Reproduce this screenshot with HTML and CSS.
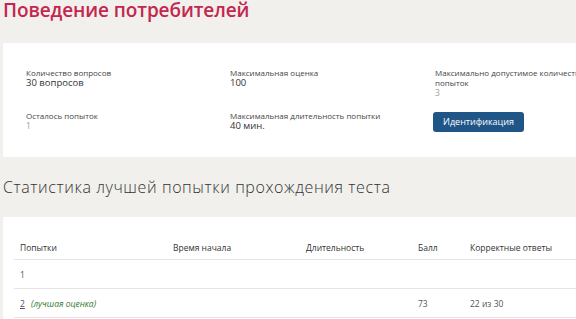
FILE: index.html
```html
<!DOCTYPE html>
<html lang="ru">
<head>
<meta charset="utf-8">
<title>Поведение потребителей</title>
<link rel="stylesheet" href="styles.css">
</head>
<body>
<div class="page">
  <h1 class="title">Поведение потребителей</h1>

  <section class="card info">
    <div class="info-grid">
      <div class="field">
        <div class="label">Количество вопросов</div>
        <div class="value">30 вопросов</div>
      </div>
      <div class="field">
        <div class="label">Максимальная оценка</div>
        <div class="value">100</div>
      </div>
      <div class="field field-wide">
        <div class="label">Максимально допустимое количество<br>попыток</div>
        <div class="value value-muted value-small">3</div>
      </div>
      <div class="field">
        <div class="label">Осталось попыток</div>
        <div class="value value-muted value-small">1</div>
      </div>
      <div class="field">
        <div class="label">Максимальная длительность попытки</div>
        <div class="value">40 мин.</div>
      </div>
      <div class="field">
        <button class="btn" type="button">Идентификация</button>
      </div>
    </div>
  </section>

  <h2 class="subtitle">Статистика лучшей попытки прохождения теста</h2>

  <section class="card stats">
    <table class="stats-table">
      <thead>
        <tr>
          <th class="c-attempt">Попытки</th>
          <th class="c-start">Время начала</th>
          <th class="c-dur">Длительность</th>
          <th class="c-score">Балл</th>
          <th class="c-correct">Корректные ответы</th>
        </tr>
      </thead>
      <tbody>
        <tr>
          <td>1</td>
          <td></td>
          <td></td>
          <td></td>
          <td></td>
        </tr>
        <tr>
          <td><a class="num-link" href="#">2</a> <span class="best">(лучшая оценка)</span></td>
          <td></td>
          <td></td>
          <td>73</td>
          <td>22 из 30</td>
        </tr>
      </tbody>
    </table>
  </section>
</div>
</body>
</html>
```

FILE: styles.css
```css
html, body {
  margin: 0;
  padding: 0;
}

body {
  background: #f1f0ed;
  font-family: "Open Sans", "Noto Sans", "DejaVu Sans", sans-serif;
  color: #333;
  overflow: hidden;
}

.page {
  width: 640px;
  padding-left: 3px;
}

.title {
  margin: 0;
  font-size: 19px;
  line-height: 20px;
  font-weight: 600;
  color: #c4264e;
  letter-spacing: -0.1px;
}

.card {
  background: #fff;
}

.info {
  margin-top: 23px;
  height: 114px;
  box-sizing: border-box;
  padding: 25px 0 0 23px;
}

.info-grid {
  display: grid;
  grid-template-columns: 204px 205px 150px;
  row-gap: 13px;
}

.label {
  font-size: 8px;
  line-height: 10px;
  color: #444;
}

.value {
  font-size: 9.5px;
  line-height: 10px;
  color: #333;
}

.value-small {
  font-size: 8.5px;
}

.value-muted {
  color: #a0a0a0;
}

.btn {
  display: block;
  margin: 1px 0 0 -2px;
  width: 91px;
  height: 20px;
  padding: 0;
  border: 0;
  border-radius: 3px;
  background: #1f5587;
  color: #fff;
  font-family: inherit;
  font-size: 9px;
  line-height: 20px;
  text-align: center;
}

.subtitle {
  margin: 0;
  padding-top: 20px;
  font-size: 16px;
  line-height: 20px;
  font-weight: 300;
  color: #333;
  letter-spacing: 0.6px;
}

.stats {
  margin-top: 20px;
  padding: 18px 0 10px 11px;
}

.stats-table {
  border-collapse: collapse;
  font-size: 8.5px;
  color: #333;
}

.stats-table th {
  font-weight: 400;
  text-align: left;
  height: 24px;
  padding: 0 0 0 6px;
  vertical-align: middle;
  border-bottom: 1px solid #e4e4e4;
}

.stats-table td {
  height: 28px;
  padding: 0 0 0 6px;
  vertical-align: middle;
  border-bottom: 1px solid #e4e4e4;
  color: #555;
}

.c-attempt { width: 147px; }
.c-start { width: 127px; }
.c-dur { width: 106px; }
.c-score { width: 46px; }
.c-correct { width: 150px; }

.num-link {
  color: #555;
  text-decoration: underline;
}

.best {
  margin-left: 4px;
  font-style: italic;
  color: #2f7a2a;
}
```
